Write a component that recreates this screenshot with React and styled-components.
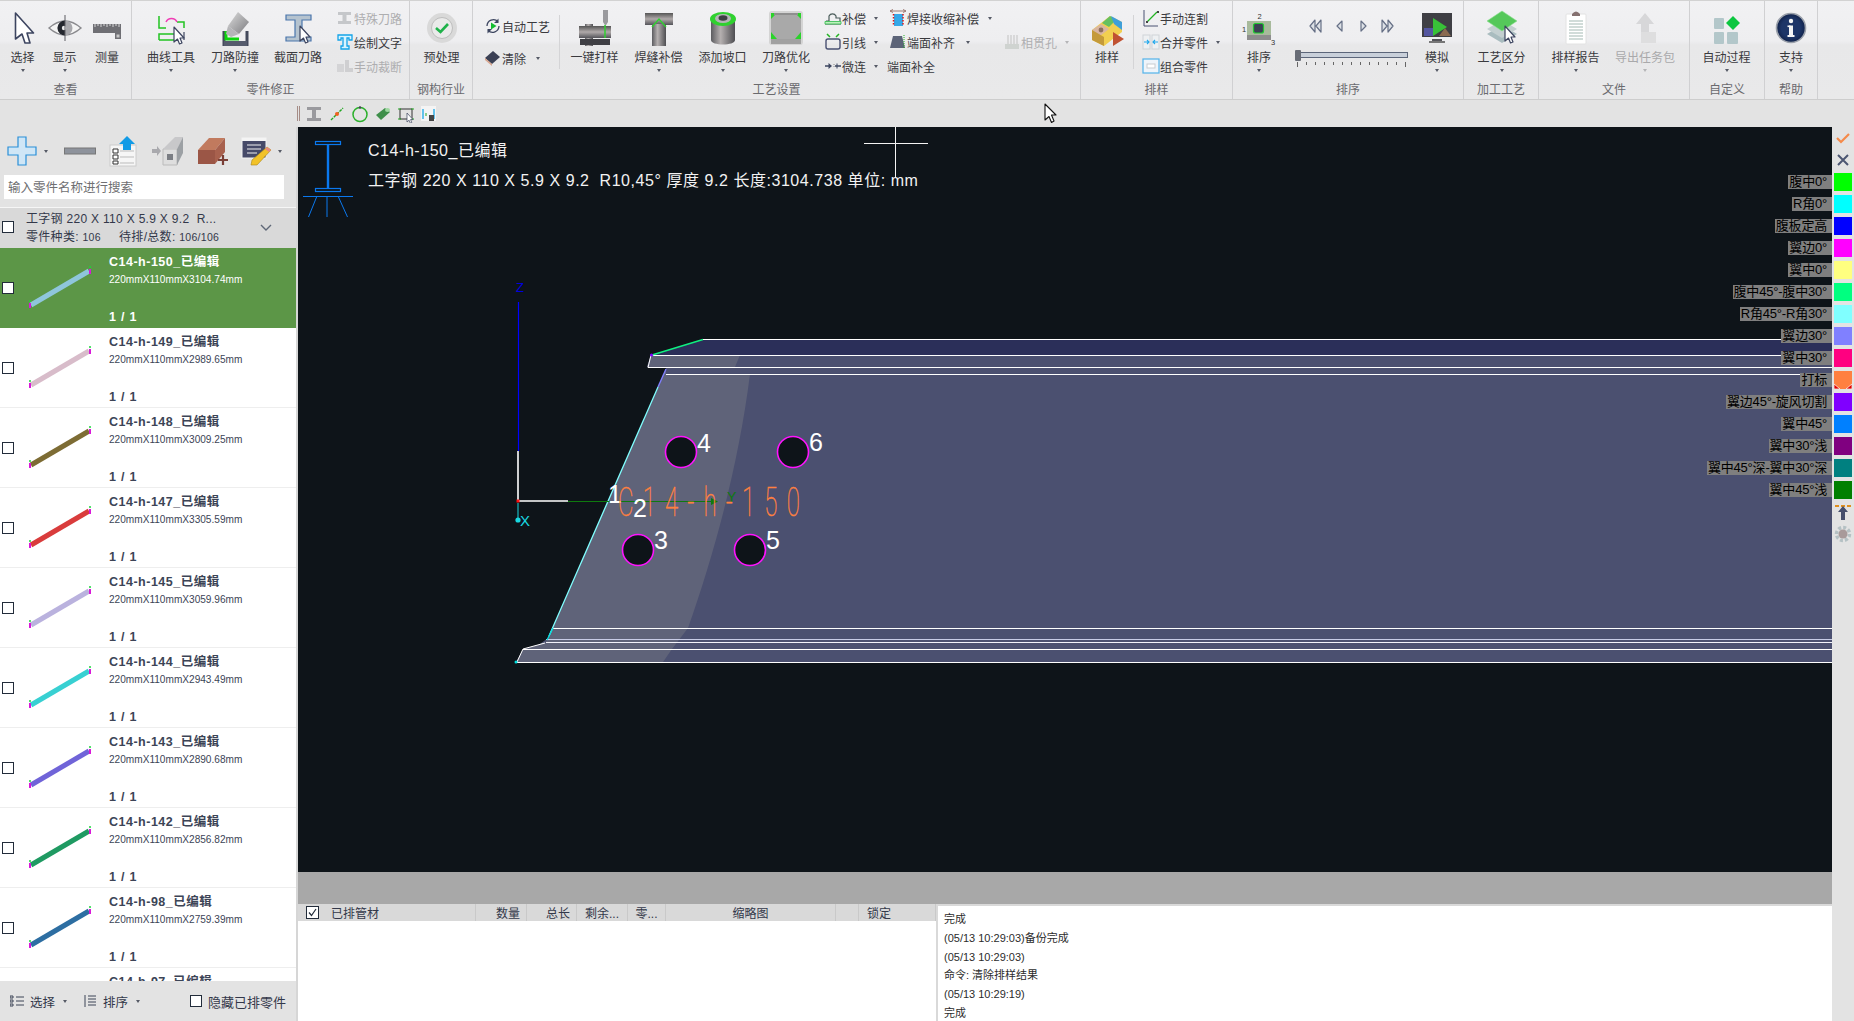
import React from 'react';
import styled, { createGlobalStyle } from 'styled-components';

const FONT = '"Liberation Sans", "Noto Sans CJK SC", sans-serif';

const GlobalStyle = createGlobalStyle`
  html, body { margin: 0; padding: 0; background: #e3e3e3; }
  body { font-family: ${FONT}; overflow: hidden; }
  * { box-sizing: border-box; }
`;

const Page = styled.div`
  position: relative;
  width: 1854px;
  height: 1021px;
  display: flex;
  flex-direction: column;
  overflow: hidden;
`;

/* ---------- ribbon ---------- */
const Ribbon = styled.div`
  height: 100px;
  flex: none;
  display: flex;
  border-top: 1px solid #d2d2d2;
  border-bottom: 1px solid #cdcdcd;
  background: linear-gradient(#f1f1f3 0, #eeeef0 40px, #e8e8e9 44px, #e9e9ea 100%);
`;

const Group = styled.div`
  width: ${(p) => p.$w}px;
  flex: none;
  padding-top: 6px;
  display: flex;
  flex-direction: column;
  border-right: 1px solid #d0d0d2;
`;

const GroupBody = styled.div`
  height: 73px;
  display: flex;
`;

const GroupLabel = styled.div`
  height: 19px;
  line-height: 21px;
  font-size: 12px;
  color: #6a6a6e;
  text-align: center;
`;

const LargeButton = styled.div`
  width: ${(p) => p.$w}px;
  flex: none;
  padding-top: 3px;
  display: flex;
  flex-direction: column;
  align-items: center;
  color: ${(p) => (p.$off ? '#a9a9ab' : '#3a3a3e')};
  font-size: 12px;
`;

const IconBox = styled.svg`
  width: 36px;
  height: 36px;
  flex: none;
  display: block;
`;

const LargeLabel = styled.div`
  margin-top: 5px;
  height: 14px;
  line-height: 14px;
  white-space: nowrap;
`;

const CaretMark = styled.span`
  display: block;
  flex: none;
  width: 0;
  height: 0;
  border-left: 2.5px solid transparent;
  border-right: 2.5px solid transparent;
  border-top: 3px solid ${(p) => (p.$off ? '#b5b5b7' : '#565a66')};
`;

const CaretSlot = styled.div`
  height: 10px;
  display: flex;
  align-items: center;
`;

const SmallColumn = styled.div`
  width: ${(p) => p.$w}px;
  margin-left: ${(p) => p.$ml || 0}px;
  margin-top: -1px;
  padding-top: ${(p) => p.$pt || 0}px;
  flex: none;
`;

const SmallRow = styled.div`
  height: ${(p) => p.$h || 24}px;
  margin-left: ${(p) => p.$ml || 0}px;
  display: flex;
  align-items: center;
  font-size: 12px;
  white-space: nowrap;
  color: ${(p) => (p.$off ? '#aeaeb0' : '#3a3a3e')};
  ${CaretMark} { margin-left: ${(p) => p.$cg || 8}px; }
`;

const SmallIcon = styled.svg`
  width: 18px;
  height: 18px;
  flex: none;
`;

const VRule = styled.div`
  width: 1px;
  height: 54px;
  margin-top: 8px;
  flex: none;
  background: #d4d4d6;
`;

const SliderBlock = styled.div`
  width: 113px;
  margin-left: 10px;
  margin-right: 3px;
  flex: none;
`;

const MediaRow = styled.div`
  height: 38px;
  display: flex;
  align-items: center;
  justify-content: space-around;
  padding: 0 8px;
`;

const Track = styled.div`
  position: relative;
  margin-top: 7px;
  height: 6px;
  background: #c9d0da;
  border: 1px solid #5c667a;
`;

const Thumb = styled.div`
  position: absolute;
  left: -1px;
  top: -3px;
  width: 6px;
  height: 11px;
  border-radius: 1px;
  background: #686c76;
`;

const Ticks = styled.div`
  margin-top: 4px;
  padding: 0 2px;
  display: flex;
  justify-content: space-between;
`;

const Tick = styled.i`
  display: block;
  width: 1px;
  height: ${(p) => (p.$tall ? 5 : 3)}px;
  background: #666;
`;

/* ---------- sub toolbar ---------- */
const SubBar = styled.div`
  height: 27px;
  flex: none;
  padding-left: 297px;
  display: flex;
  align-items: center;
  background: #e3e3e3;
`;

const Grip = styled.div`
  width: 3px;
  height: 15px;
  margin-right: 5px;
  border-left: 1px solid #a58c86;
  border-right: 1px solid #a58c86;
`;

const SubIcon = styled.svg`
  width: 18px;
  height: 18px;
  margin-right: 5px;
  flex: none;
`;

/* ---------- body ---------- */
const Body = styled.div`
  flex: 1;
  min-height: 0;
  display: flex;
`;

const LeftPanel = styled.div`
  width: 298px;
  flex: none;
  display: flex;
  flex-direction: column;
  background: #fff;
  border-right: 2px solid #d6d6d6;
`;

const PanelTools = styled.div`
  height: 48px;
  flex: none;
  display: flex;
  align-items: center;
  background: #e3e3e3;
`;

const ToolSlot = styled.div`
  width: ${(p) => p.$w}px;
  margin-left: ${(p) => p.$ml || 0}px;
  flex: none;
  display: flex;
  align-items: center;
  justify-content: center;
  svg { flex: none; }
`;

const SearchWrap = styled.div`
  height: 33px;
  flex: none;
  padding: 0 12px 8px 4px;
  background: #e3e3e3;
  border-bottom: 1px solid #f6f6f6;
`;

const SearchBox = styled.div`
  height: 24px;
  line-height: 26px;
  padding-left: 4px;
  background: #fff;
  font-size: 12.5px;
  color: #6f6f72;
`;

const GroupHeader = styled.div`
  height: 40px;
  flex: none;
  display: flex;
  align-items: center;
  background: #d9d9d9;
  color: #33384a;
  padding-left: 2px;
  padding-right: 24px;
`;

const Check = styled.span`
  width: 12px;
  height: 12px;
  flex: none;
  display: block;
  background: #fff;
  border: 1px solid #222c3a;
`;

const HeaderCheck = styled(Check)`
  margin-top: -2px;
`;

const HeaderText = styled.div`
  margin-left: 12px;
  flex: 1;
  font-size: 12px;
  line-height: 18px;
  letter-spacing: 0.3px;
  white-space: pre;
`;

const HeaderCount = styled.span`
  font-size: 10.5px;
`;

const PartList = styled.div`
  flex: 1;
  min-height: 0;
  overflow: hidden;
`;

const PartRow = styled.div`
  height: 80px;
  display: flex;
  padding-left: 2px;
  align-items: flex-start;
  background: ${(p) => (p.$on ? '#5c9647' : '#fff')};
  color: ${(p) => (p.$on ? '#fff' : '#3c4456')};
  border-bottom: 1px solid ${(p) => (p.$on ? '#5c9647' : '#eeeeee')};
  ${Check} { margin-top: 34px; }
`;

const Thumbnail = styled.svg`
  width: 80px;
  height: 80px;
  margin-left: 6px;
  flex: none;
`;

const PartText = styled.div`
  margin-left: 9px;
  padding-top: 7px;
  display: flex;
  flex-direction: column;
`;

const PartName = styled.div`
  font-size: 12.5px;
  font-weight: 700;
  line-height: 14px;
  letter-spacing: 0.5px;
`;

const PartSize = styled.div`
  margin-top: 4px;
  font-size: 10.1px;
  line-height: 14px;
`;

const PartCount = styled.div`
  margin-top: 23px;
  font-size: 12.5px;
  font-weight: 700;
  line-height: 14px;
  letter-spacing: 0.8px;
`;

const PanelFooter = styled.div`
  height: 40px;
  flex: none;
  display: flex;
  align-items: center;
  background: #e3e3e3;
  font-size: 12.5px;
  color: #33384a;
  padding-left: 10px;
`;

const FooterItem = styled.div`
  width: ${(p) => p.$w}px;
  flex: none;
  display: flex;
  align-items: center;
  gap: 6px;
  ${CaretMark} { margin-left: 2px; }
`;

const FooterLabel = styled.span`
  margin-left: 6px;
  font-size: 13px;
  white-space: nowrap;
`;

const Center = styled.div`
  flex: 1;
  min-width: 0;
  display: flex;
  flex-direction: column;
`;

const Canvas = styled.div`
  position: relative;
  height: 745px;
  flex: none;
  background: #0e1419;
  overflow: hidden;
`;

const Drawing = styled.svg`
  position: absolute;
  left: 0;
  top: 0;
  width: 1534px;
  height: 745px;
`;

const CanvasInfo = styled.div`
  position: absolute;
  left: 70px;
  top: 13px;
  color: #f2f2f2;
  font-size: 16px;
  white-space: pre;
  letter-spacing: 0.55px;
`;

const InfoLine = styled.div`
  height: 30px;
  line-height: 22px;
`;

const GreyBand = styled.div`
  height: 32px;
  flex: none;
  background: #a8a8a8;
`;

const BottomPanels = styled.div`
  flex: 1;
  min-height: 0;
  display: flex;
  background: #fff;
`;

const TablePane = styled.div`
  width: 640px;
  flex: none;
  border-right: 2px solid #d9d9d9;
`;

const TableHead = styled.div`
  height: 17px;
  display: grid;
  grid-template-columns: 178px 51px 50px 51px 38px 170px 23px 77px;
  background: #d9d9d9;
  font-size: 12px;
  color: #33384a;
`;

const HeadCell = styled.div`
  display: flex;
  align-items: center;
  justify-content: ${(p) => p.$justify || 'center'};
  gap: 12px;
  padding-left: ${(p) => p.$pl || 0}px;
  padding-right: ${(p) => p.$pr || 0}px;
  border-right: 1px solid #c9c9c9;
  white-space: nowrap;
  overflow: hidden;
`;

const TickBox = styled.svg`
  width: 13px;
  height: 13px;
  flex: none;
`;

const LogPane = styled.div`
  flex: 1;
  margin-top: 2px;
  padding: 4px 0 0 6px;
  font-size: 11px;
  line-height: 18.8px;
  color: #2c2c2c;
  overflow: hidden;
  box-shadow: 0 -2px 0 #d9d9d9;
`;

/* ---------- right strip ---------- */
const Strip = styled.div`
  width: 22px;
  flex: none;
  display: flex;
  flex-direction: column;
  background: #e3e3e3;
`;

const StripButton = styled.div`
  height: ${(p) => p.$h || 22}px;
  margin-top: ${(p) => p.$mt || 0}px;
  display: flex;
  align-items: center;
  justify-content: center;
`;

const LayerRow = styled.div`
  position: relative;
  height: 22px;
  padding: 2px 0 0 2px;
`;

const LayerSwatch = styled.div`
  position: relative;
  width: 18px;
  height: 18px;
  background: ${(p) => p.$c};
  overflow: hidden;
`;

const Corner = styled.svg`
  position: absolute;
  left: 0;
  bottom: 0;
  width: 18px;
  height: 18px;
`;

const LayerLabel = styled.div`
  position: absolute;
  right: 100%;
  top: 4px;
  height: 14px;
  padding: 0 5px 0 1px;
  background: #7f7f7f;
  color: #000;
  font-size: 13px;
  line-height: 14px;
  letter-spacing: -0.2px;
  white-space: nowrap;
`;

const Dashes = styled.div`
  margin: 4px 2px 0 3px;
  height: 2px;
  flex: none;
  background: repeating-linear-gradient(90deg, #e09020 0 4px, transparent 4px 6px);
`;

const MousePointer = styled.svg`
  position: absolute;
  left: 1044px;
  top: 103px;
  width: 14px;
  height: 21px;
`;

/* ---------- icons ---------- */
const Pointer = ({ x = 0, y = 0, s = 1 }) => (
  <path
    transform={`translate(${x} ${y}) scale(${s})`}
    d="M0 0 L10 11 L6 11 L8 16 L5.5 17 L3.5 12 L0 15 Z"
    fill="#fff"
    stroke="#3d4560"
    strokeWidth="1.2"
    strokeLinejoin="round"
  />
);

const Defs = () => (
  <svg width="0" height="0" style={{ position: 'absolute' }}>
    <defs>
      <linearGradient id="metalH" x1="0" y1="0" x2="1" y2="0">
        <stop offset="0" stopColor="#5c5c60" />
        <stop offset="0.4" stopColor="#b5b0b0" />
        <stop offset="1" stopColor="#4e4e52" />
      </linearGradient>
      <linearGradient id="metalV" x1="0" y1="0" x2="0" y2="1">
        <stop offset="0" stopColor="#555" />
        <stop offset="0.5" stopColor="#b0aaaa" />
        <stop offset="1" stopColor="#54545a" />
      </linearGradient>
      <linearGradient id="grayD" x1="0" y1="0" x2="1" y2="1">
        <stop offset="0" stopColor="#dcdcdc" />
        <stop offset="1" stopColor="#7a7a7e" />
      </linearGradient>
      <radialGradient id="infoBall">
        <stop offset="0.65" stopColor="#1d3567" />
        <stop offset="1" stopColor="#11224a" />
      </radialGradient>
    </defs>
  </svg>
);

const large = {
  select: <path d="M10.5 3 L28.5 23 L22 23 L25 33 L20 33 L17 24 L10.5 29 Z" fill="#fff" stroke="#3d4560" strokeWidth="1.6" strokeLinejoin="round" />,
  eye: (
    <>
      <path d="M2 18 Q18 4 34 18 Q18 32 2 18Z" fill="#f4f4f4" stroke="#8a8a8e" strokeWidth="1.4" />
      <circle cx="18" cy="18" r="7.5" fill="#a8a8ac" />
      <path d="M18 10.5 A7.5 7.5 0 0 0 18 25.5Z" fill="#24272e" />
      <circle cx="17" cy="18" r="2.2" fill="#e8e8e8" />
      <path d="M18 5 V31" stroke="#5a5a60" strokeWidth="1" />
    </>
  ),
  ruler: (
    <>
      <path d="M4 14 H32 V29 H26 V23 H4Z" fill="#6f6f74" />
      <path d="M27.5 24.5 H30.5 V27.5 H27.5Z" fill="#c8c8c8" />
      <path d="M6 14 v3 M9 14 v2 M12 14 v3 M15 14 v2 M18 14 v3 M21 14 v2 M24 14 v3 M27 14 v2 M30 14 v3" stroke="#d8d8d8" strokeWidth="1" />
    </>
  ),
  curve: (
    <>
      <path d="M6 6 V18 H13 M24 12 H31 V18" fill="none" stroke="#22c422" strokeWidth="1.5" />
      <path d="M13 12 A6 6 0 0 1 24 12" fill="none" stroke="#f03cb4" strokeWidth="1.5" />
      <path d="M6 30 V24 H22 M6 30 H24" fill="none" stroke="#22c422" strokeWidth="1.5" />
      <path d="M31 22 V30" stroke="#3d4560" strokeWidth="1.2" />
      <Pointer x={21} y={17} s={1} />
    </>
  ),
  collide: (
    <>
      <path d="M7 21 V36 M30 21 V36" stroke="#444a5c" strokeWidth="3" />
      <path d="M7 31 H30 V36 H7Z" fill="#555b6c" />
      <path d="M21 2 L32 12 L22 24 L11 16Z" fill="url(#grayD)" />
      <path d="M9 21 V29 H22" fill="none" stroke="#0ed40e" strokeWidth="3" />
      <path d="M11 16 L22 24 L14 27 L9 24Z" fill="#b5b5b8" />
    </>
  ),
  section: (
    <>
      <path d="M6 5 H31 V10 H22 V27 H31 V31 H6 V27 H15 V10 H6Z" fill="#b5c3cf" stroke="#4a76ac" strokeWidth="1.2" />
      <Pointer x={20} y={16} s={1} />
    </>
  ),
  prep: (
    <>
      <circle cx="18" cy="18" r="15" fill="#d9d9d9" />
      <circle cx="18" cy="18" r="10.5" fill="#eaeaea" stroke="#bdbdbd" />
      <path d="M12 18 L16.5 22 L24 14" fill="none" stroke="#1fb24a" strokeWidth="2.6" />
    </>
  ),
  machine: (
    <>
      <path d="M26 0 H31 V12 L28.5 16 L26 12Z" fill="#9a9a9e" />
      <rect x="8" y="14" width="8" height="22" fill="url(#metalH)" />
      <rect x="2" y="16" width="32" height="12" fill="url(#metalV)" />
      <rect x="3" y="29" width="30" height="6" fill="#3f3f44" />
      <path d="M28 15 V28" stroke="#2fd12f" strokeWidth="1.5" />
    </>
  ),
  tee: (
    <>
      <rect x="4" y="3" width="28" height="12" fill="url(#metalV)" />
      <rect x="11" y="14" width="14" height="22" fill="url(#metalH)" />
      <path d="M11 17 L18 9 L25 17" fill="none" stroke="#2fd12f" strokeWidth="1.4" />
    </>
  ),
  bevel: (
    <>
      <path d="M6 10 V30 C6 36 30 36 30 30 V10Z" fill="url(#metalH)" />
      <ellipse cx="18" cy="9" rx="13" ry="7" fill="#2fd12f" />
      <ellipse cx="18" cy="8.5" rx="8" ry="4.5" fill="#b5b5b8" />
      <ellipse cx="18" cy="8" rx="4.5" ry="2.8" fill="#3e3e44" />
    </>
  ),
  optimize: (
    <>
      <rect x="1" y="1" width="34" height="34" rx="3" fill="#d4d4d4" />
      <rect x="3" y="27" width="30" height="7" fill="#a0a0a0" />
      <rect x="3" y="3" width="30" height="26" fill="#2ad32a" />
      <path d="M9 3 H27 L33 9 V22 L27 29 H9 L3 22 V9Z" fill="#a9a9a9" />
      <path d="M6 3 H30 V5 H6Z" fill="#8f8f8f" />
    </>
  ),
  nest: (
    <>
      <path d="M3 20 L21 6 L33 12 L33 22 L15 36 L3 30Z" fill="#f2cf50" />
      <path d="M3 20 L12 14 L20 19 L11 26Z" fill="#d9b5a0" />
      <path d="M13 13 L21 6 L27 10 L20 17Z" fill="#66c060" />
      <path d="M22 6 L33 12 V20 L25 14Z" fill="#3f9fd8" />
      <path d="M3 20 V30 L15 36 V27Z" fill="#c49a3a" />
      <circle cx="12" cy="20" r="2.4" fill="#8d6e5c" />
      <path d="M24 22 L35 29 L24 36Z" fill="#c05232" />
    </>
  ),
  order: (
    <>
      <text x="16.5" y="9" fontSize="7.5" fill="#333" fontFamily="Liberation Sans">2</text>
      <text x="1" y="22" fontSize="7.5" fill="#333" fontFamily="Liberation Sans">1</text>
      <text x="30" y="35" fontSize="7.5" fill="#333" fontFamily="Liberation Sans">3</text>
      <rect x="6" y="11" width="24" height="19" fill="#a8ba9c" />
      <rect x="6" y="25" width="24" height="5" fill="#8d8d8d" />
      <rect x="12.5" y="13.5" width="10" height="9.5" rx="2" fill="#3c4054" stroke="#20cc30" strokeWidth="1.2" />
    </>
  ),
  simulate: (
    <>
      <rect x="3" y="3" width="30" height="24" fill="#3f3f44" />
      <path d="M5 18 H14 V26 H5Z" fill="#5456a0" />
      <path d="M26 18 L32 26 H20Z" fill="#8a6a50" />
      <path d="M14 8 L28 17 L14 26Z" fill="#38c238" />
      <path d="M13 29 H23 V31 H13Z" fill="#55555a" />
      <path d="M10 31 H26 V33 H10Z" fill="#777" />
    </>
  ),
  layers: (
    <>
      <path d="M18 15 L33 24 L18 33 L3 24Z" fill="#a9bcbf" />
      <path d="M18 10 L33 19 L18 28 L3 19Z" fill="#c3cfd0" />
      <path d="M18 1 L33 11 L18 21 L3 11Z" fill="#55c85a" stroke="#8adf8e" strokeWidth="0.6" />
      <Pointer x={21} y={16} s={1} />
    </>
  ),
  report: (
    <>
      <rect x="8" y="4" width="20" height="30" rx="1" fill="#fff" stroke="#e2e2e2" />
      <path d="M14 4 Q18 -1 22 4 V6 H14Z" fill="#857170" />
      <path d="M11 11 H25 M11 14 H25 M11 17 H25 M11 20 H25 M11 23 H25 M11 26 H25 M11 29 H25" stroke="#a4b9b4" strokeWidth="1.1" />
    </>
  ),
  exportPkg: (
    <>
      <path d="M18 3 L27 14 H22 V26 H14 V14 H9Z" fill="#d7d7d9" />
      <path d="M14 22 H29 V33 H14Z" fill="#dededf" />
    </>
  ),
  auto: (
    <>
      <rect x="5" y="8" width="10" height="11" rx="1" fill="#b3c7ca" />
      <rect x="5" y="22" width="10" height="12" rx="1" fill="#b3c7ca" />
      <rect x="18" y="22" width="11" height="12" rx="1" fill="#b3c7ca" />
      <path d="M24 6 L31 13 L24 20 L17 13Z" fill="#0cc640" />
    </>
  ),
  info: (
    <>
      <circle cx="18" cy="18" r="14.5" fill="url(#infoBall)" stroke="#9aa0aa" strokeWidth="1.6" />
      <rect x="16" y="15.5" width="4" height="10" fill="#f4f4f4" />
      <rect x="14.5" y="25" width="7" height="2" fill="#f4f4f4" />
      <rect x="14.5" y="15.5" width="3" height="1.6" fill="#f4f4f4" />
      <circle cx="18" cy="11" r="2.2" fill="#f4f4f4" />
    </>
  ),
};

const small = {
  special: <path d="M2 3 H15 V6 H10.5 V12 H15 V15 H2 V12 H6.5 V6 H2Z" fill="#c5c7ca" />,
  text: <path d="M2 2 H16 V7 H13 V5 H11 V13 H13 V16 H5 V13 H7 V5 H5 V7 H2Z" fill="#d8f4ff" stroke="#15a4e8" strokeWidth="1.3" />,
  trim: (
    <>
      <path d="M1 7 H8 V15 H1Z" fill="#d4d4d6" />
      <path d="M9 3 H13 V11 H17 V15 H9Z" fill="#cfcfd1" />
    </>
  ),
  auto: (
    <>
      <path d="M3 9 A6.5 6.5 0 0 1 14 4.5 M15 9 A6.5 6.5 0 0 1 4 13.5" fill="none" stroke="#3d4660" strokeWidth="1.3" />
      <path d="M14.5 1.5 V6 H10Z M3.5 16.5 V12 H8Z" fill="#3d4660" />
      <path d="M7 5.5 L12.5 9 L7 12.5Z" fill="#14bc30" />
    </>
  ),
  clear: (
    <>
      <path d="M1 9 L9 2 L16 8 L8 15Z" fill="#3b4054" />
      <path d="M1 9 L8 15 L8 17 L1 11Z" fill="#d8a48c" />
    </>
  ),
  comp: (
    <>
      <path d="M1 15 H17 M2 12 H5 V7 A4 4 0 0 1 12 7 V9 H16 V12" fill="none" stroke="#4a5c5a" strokeWidth="1.2" />
      <path d="M1 12.5 H17 V15 H1Z" fill="#bdf0bd" stroke="#2dba4a" strokeWidth="0.8" />
    </>
  ),
  lead: (
    <>
      <rect x="2" y="6" width="14" height="10" rx="2" fill="none" stroke="#4a5273" strokeWidth="1.4" />
      <path d="M3 1 L6 4 M15 1 L12 4" stroke="#22b322" strokeWidth="1.5" />
    </>
  ),
  micro: (
    <>
      <path d="M1 9 H7 M11 9 H17" stroke="#3d4660" strokeWidth="1.3" />
      <path d="M8 9 L4.5 6 V12Z" fill="#3d4660" />
      <path d="M10 7 V11" stroke="#888" strokeDasharray="1 1" />
      <path d="M13 6.5 V11.5" stroke="#3d4660" />
    </>
  ),
  shrink: (
    <>
      <path d="M1 2 H17 M4 0.5 L1 2 L4 3.5 M14 0.5 L17 2 L14 3.5" fill="none" stroke="#9e7a72" strokeWidth="1" />
      <rect x="5" y="5" width="9" height="12" fill="#36a8e8" />
      <path d="M4.5 5 V17 M14 5 V17" stroke="#e01818" strokeDasharray="1.5 1.5" strokeWidth="1.5" />
    </>
  ),
  align: (
    <>
      <path d="M4 3 H13 L16 15 H1Z" fill="#5c6478" />
      <path d="M15 2 V15" stroke="#22b322" strokeDasharray="1 1" />
    </>
  ),
  through: (
    <>
      <path d="M2 11 H16 V16 H2Z" fill="#cfd3d0" />
      <path d="M5 2 V11 M8 2 V11 M11 2 V11 M14 2 V11" stroke="#cfcfcf" strokeWidth="1.4" />
    </>
  ),
  cut: (
    <>
      <path d="M2 1 V17 H16" fill="none" stroke="#4a5273" strokeWidth="1" />
      <path d="M5 13 L15 3" stroke="#22b322" strokeWidth="1.3" />
      <path d="M15 2 h2 v2 h-2Z M4 12 h2 v2 h-2Z" fill="#444" />
    </>
  ),
  merge: (
    <>
      <rect x="1" y="2" width="7" height="14" fill="#eef0f2" stroke="#cfd4d8" />
      <rect x="10" y="2" width="7" height="14" fill="#eef0f2" stroke="#cfd4d8" />
      <path d="M2 9 H7 M16 9 H11 M5 7 L7 9 L5 11 M13 7 L11 9 L13 11" fill="none" stroke="#22a8ec" strokeWidth="1.1" />
    </>
  ),
  combine: (
    <>
      <rect x="1" y="2" width="16" height="14" fill="#eef4fa" stroke="#52b2ea" strokeWidth="1.2" />
      <rect x="5" y="7" width="8" height="4" fill="#fff" stroke="#c8ccd0" />
    </>
  ),
};

const Large = ({ w, icon, label, caret, off }) => (
  <LargeButton $w={w} $off={off}>
    <IconBox viewBox="0 0 36 36">{large[icon]}</IconBox>
    <LargeLabel>{label}</LargeLabel>
    <CaretSlot>{caret && <CaretMark $off={off} />}</CaretSlot>
  </LargeButton>
);

const Small = ({ icon, label, caret, off, h, cg, ml }) => (
  <SmallRow $off={off} $h={h} $cg={cg} $ml={ml}>
    {icon && <SmallIcon viewBox="0 0 18 18">{small[icon]}</SmallIcon>}
    <span>{label}</span>
    {caret && <CaretMark $off={off} />}
  </SmallRow>
);

const Media = ({ d }) => (
  <svg width="14" height="16" viewBox="0 0 14 16">
    <path d={d} fill="#dde1e6" stroke="#667086" strokeWidth="1.2" strokeLinejoin="round" />
  </svg>
);

const parts = [
  ['C14-h-150_已编辑', '3104.74', '#8fc6dc'],
  ['C14-h-149_已编辑', '2989.65', '#d8bcca'],
  ['C14-h-148_已编辑', '3009.25', '#7d6c34'],
  ['C14-h-147_已编辑', '3305.59', '#d93c3c'],
  ['C14-h-145_已编辑', '3059.96', '#bab2de'],
  ['C14-h-144_已编辑', '2943.49', '#38d0d2'],
  ['C14-h-143_已编辑', '2890.68', '#7064d8'],
  ['C14-h-142_已编辑', '2856.82', '#1f9a62'],
  ['C14-h-98_已编辑', '2759.39', '#2d6ea2'],
  ['C14-h-97_已编辑', '2741.10', '#888888'],
];

const layers = [
  ['腹中0°', '#00ff00'],
  ['R角0°', '#00ffff'],
  ['腹板定高', '#0000ff'],
  ['翼边0°', '#ff00ff'],
  ['翼中0°', '#ffff80'],
  ['腹中45°-腹中30°', '#00ff80'],
  ['R角45°-R角30°', '#80ffff'],
  ['翼边30°', '#8080ff'],
  ['翼中30°', '#ff0080'],
  ['打标', '#ff8040', true],
  ['翼边45°-旋风切割', '#8000ff'],
  ['翼中45°', '#0080ff'],
  ['翼中30°浅', '#800080'],
  ['翼中45°深-翼中30°深', '#008080'],
  ['翼中45°浅', '#008000'],
];

const logLines = [
  '完成',
  '(05/13 10:29:03)备份完成',
  '(05/13 10:29:03)',
  '命令: 清除排样结果',
  '(05/13 10:29:19)',
  '完成',
];

const holes = [
  [681, 452, '4', 704, 452],
  [793, 452, '6', 816, 451],
  [638, 550, '3', 661, 549],
  [750, 550, '5', 773, 549],
];

const BeamDrawing = () => (
  <Drawing viewBox="298 127 1534 745">
    {/* I 字钢示意 */}
    <g stroke="#0a78ee" fill="none">
      <rect x="315.5" y="141.5" width="25" height="3" strokeWidth="1.2" />
      <rect x="315.5" y="188.5" width="25" height="3" strokeWidth="1.2" />
      <path d="M328 144 V189" strokeWidth="2.4" />
      <path d="M303 196.5 H353 M327 196 V217 M317 196 L308.5 217 M338 196 L347.5 217" strokeWidth="1" />
    </g>
    <path d="M864 143.5 H928 M895.5 127 V177" stroke="#f4f4f4" strokeWidth="1" />

    {/* 钢体 */}
    <path d="M651 355 L703 339.5 H1832 V355Z" fill="#2b2f59" />
    <path d="M651 355 H1832 V374 H666 V367 H647Z" fill="#4b5070" />
    <path d="M651 355 H740 L735 367 H647Z" fill="#5f6379" />
    <path d="M666 369 L548 638 L516 662 H1832 V374 H666Z" fill="#4b5070" />
    <path d="M666 369 L548 638 L545 643 L523 649 L516 662 H663 L672 649 L688 628 C712 560 738 470 750 374 H666Z" fill="#5f6379" />
    <g stroke="#fff" strokeWidth="1" fill="none">
      <path d="M703 339.5 H1832" />
      <path d="M651 355.5 H1832" />
      <path d="M651 355 L648 367.5 H1832" />
      <path d="M666 374.5 H1832" />
      <path d="M553 628.5 H1832" />
      <path d="M523 649.5 H1832" />
      <path d="M516 662.5 H1832" />
      <path d="M545 643 L523 649 L517 662" />
    </g>
    <path d="M546 639.5 H1832" stroke="#c8cce6" strokeWidth="1" />
    <path d="M546 642.5 H1832" stroke="#f2f2fa" strokeWidth="1" />
    <path d="M652 355 L703 339.5" stroke="#10f080" strokeWidth="1.4" />
    <circle cx="651.5" cy="355" r="1.6" fill="#8000ff" />
    <path d="M666 369 L658 387" stroke="#8080ff" strokeWidth="1.4" />
    <path d="M658 387 L549 636" stroke="#80ffff" strokeWidth="1.3" />
    <path d="M553 628 L547 640" stroke="#00e0e0" strokeWidth="1.3" />
    <circle cx="516" cy="662" r="1.5" fill="#00e0e0" />

    {/* 坐标轴 */}
    <path d="M518.5 302 V451" stroke="#0000ff" strokeWidth="1.2" />
    <text x="516" y="292" fontSize="13" fill="#0000e0" fontFamily="Liberation Sans">Z</text>
    <path d="M518 451 V501 H568" fill="none" stroke="#fff" strokeWidth="1.6" />
    <path d="M568 501.5 H712" stroke="#0e7a0e" strokeWidth="1" />
    <path d="M711 498 L718 501.5 L711 505Z" fill="#0e7a0e" />
    <text x="727" y="502" fontSize="14" fill="#0e7a0e" fontFamily="Liberation Sans">Y</text>
    <rect x="516.5" y="499.5" width="3" height="3" fill="#ff1010" />
    <path d="M518 503 V519" stroke="#19d8e0" strokeWidth="1" />
    <circle cx="518" cy="520" r="2.6" fill="#19d8e0" />
    <text x="520" y="526" fontSize="15" fill="#19d8e0" fontFamily="Liberation Sans">X</text>

    {/* 孔 */}
    {holes.map(([cx, cy, n, tx, ty]) => (
      <g key={n}>
        <circle cx={cx} cy={cy} r="15.5" fill="#0e1419" stroke="#ff14ff" strokeWidth="1.6" />
        <text x={tx} y={ty} fontSize="25" fill="#fff" fontFamily="Liberation Sans" textAnchor="middle">{n}</text>
      </g>
    ))}
    <text x="608" y="503" fontSize="25" fill="#fff" fontFamily="Liberation Sans">1</text>
    <text x="633" y="517" fontSize="25" fill="#fff" fontFamily="Liberation Sans">2</text>

    {/* 零件名：字窄、字距宽 */}
    <text
      transform="translate(618 516) scale(0.6 1)"
      fontSize="40"
      fontWeight="100"
      fontFamily="Roboto, 'Liberation Sans', sans-serif"
      fill="#ff8040"
      stroke="#ff8040"
      strokeWidth="0.5"
      textLength="303"
      lengthAdjust="spacing"
    >
      C14-h-150
    </text>
  </Drawing>
);

const App = () => (
  <Page>
    <GlobalStyle />
    <Defs />
    <Ribbon>
      <Group $w={132}>
        <GroupBody>
          <Large w={45} icon="select" label="选择" caret />
          <Large w={39} icon="eye" label="显示" caret />
          <Large w={46} icon="ruler" label="测量" />
        </GroupBody>
        <GroupLabel>查看</GroupLabel>
      </Group>
      <Group $w={278}>
        <GroupBody>
          <Large w={78} icon="curve" label="曲线工具" caret />
          <Large w={50} icon="collide" label="刀路防撞" caret />
          <Large w={76} icon="section" label="截面刀路" />
          <SmallColumn $w={72}>
            <Small icon="special" label="特殊刀路" off />
            <Small icon="text" label="绘制文字" />
            <Small icon="trim" label="手动裁断" off />
          </SmallColumn>
        </GroupBody>
        <GroupLabel>零件修正</GroupLabel>
      </Group>
      <Group $w={63}>
        <GroupBody>
          <Large w={63} icon="prep" label="预处理" />
        </GroupBody>
        <GroupLabel>钢构行业</GroupLabel>
      </Group>
      <Group $w={608}>
        <GroupBody>
          <SmallColumn $w={75} $ml={11} $pt={4}>
            <Small icon="auto" label="自动工艺" h={32} />
            <Small icon="clear" label="清除" caret h={32} cg={10} />
          </SmallColumn>
          <VRule />
          <Large w={69} icon="machine" label="一键打样" />
          <Large w={59} icon="tee" label="焊缝补偿" caret />
          <Large w={69} icon="bevel" label="添加坡口" caret />
          <Large w={58} icon="optimize" label="刀路优化" caret />
          <SmallColumn $w={65} $ml={9}>
            <Small icon="comp" label="补偿" caret cg={8} />
            <Small icon="lead" label="引线" caret cg={8} />
            <Small icon="micro" label="微连" caret cg={8} />
          </SmallColumn>
          <SmallColumn $w={114}>
            <Small icon="shrink" label="焊接收缩补偿" caret cg={9} />
            <Small icon="align" label="端面补齐" caret cg={11} />
            <Small label="端面补全" ml={-2} />
          </SmallColumn>
          <SmallColumn $w={70}>
            <Small label=" " />
            <Small icon="through" label="相贯孔" caret off />
          </SmallColumn>
        </GroupBody>
        <GroupLabel>工艺设置</GroupLabel>
      </Group>
      <Group $w={152}>
        <GroupBody>
          <Large w={52} icon="nest" label="排样" />
          <VRule />
          <SmallColumn $w={88} $ml={8}>
            <Small icon="cut" label="手动连割" />
            <Small icon="merge" label="合并零件" caret />
            <Small icon="combine" label="组合零件" />
          </SmallColumn>
        </GroupBody>
        <GroupLabel>排样</GroupLabel>
      </Group>
      <Group $w={231}>
        <GroupBody>
          <Large w={52} icon="order" label="排序" caret />
          <SliderBlock>
            <MediaRow>
              <Media d="M7 2 L2 8 L7 14Z M13 2 L8 8 L13 14Z" />
              <Media d="M10 3 L5 8 L10 13Z" />
              <Media d="M4 3 L9 8 L4 13Z" />
              <Media d="M1 2 L6 8 L1 14Z M7 2 L12 8 L7 14Z" />
            </MediaRow>
            <Track>
              <Thumb />
            </Track>
            <Ticks>
              {Array.from({ length: 13 }, (_, i) => (
                <Tick key={i} $tall={i === 0 || i === 12} />
              ))}
            </Ticks>
          </SliderBlock>
          <Large w={52} icon="simulate" label="模拟" caret />
        </GroupBody>
        <GroupLabel>排序</GroupLabel>
      </Group>
      <Group $w={75}>
        <GroupBody>
          <Large w={75} icon="layers" label="工艺区分" caret />
        </GroupBody>
        <GroupLabel>加工工艺</GroupLabel>
      </Group>
      <Group $w={151}>
        <GroupBody>
          <Large w={73} icon="report" label="排样报告" caret />
          <Large w={66} icon="exportPkg" label="导出任务包" caret off />
        </GroupBody>
        <GroupLabel>文件</GroupLabel>
      </Group>
      <Group $w={75}>
        <GroupBody>
          <Large w={73} icon="auto" label="自动过程" caret />
        </GroupBody>
        <GroupLabel>自定义</GroupLabel>
      </Group>
      <Group $w={53}>
        <GroupBody>
          <Large w={52} icon="info" label="支持" caret />
        </GroupBody>
        <GroupLabel>帮助</GroupLabel>
      </Group>
    </Ribbon>

    <SubBar>
      <Grip />
      <SubIcon viewBox="0 0 18 18">
        <path d="M2 2 H16 V5 H11 V13 H16 V16 H2 V13 H7 V5 H2Z" fill="#9a9a9e" />
      </SubIcon>
      <SubIcon viewBox="0 0 18 18">
        <path d="M3 15 L15 3" stroke="#22a822" strokeWidth="1.4" strokeDasharray="3 1" />
        <circle cx="9" cy="9" r="2" fill="#f06020" />
      </SubIcon>
      <SubIcon viewBox="0 0 18 18">
        <circle cx="9" cy="9.5" r="7" fill="none" stroke="#2bb02b" strokeWidth="1.5" />
        <circle cx="9" cy="2.5" r="1.2" fill="#445" />
      </SubIcon>
      <SubIcon viewBox="0 0 18 18">
        <path d="M2 10 L11 3 L16 7 L7 15Z" fill="#3f8f4a" />
        <ellipse cx="13.5" cy="5" rx="2.5" ry="2" fill="#9ed8a0" />
      </SubIcon>
      <SubIcon viewBox="0 0 18 18">
        <rect x="3" y="4" width="12" height="10" fill="none" stroke="#333" />
        <path d="M1 4 H4 M14 4 H17 M1 14 H4 M14 14 H17" stroke="#22a822" />
        <Pointer x={10} y={8} s={0.6} />
      </SubIcon>
      <SubIcon viewBox="0 0 18 18">
        <rect x="1" y="1" width="15" height="15" fill="#f4f4f4" />
        <path d="M3 4 V14 M14 4 V14" stroke="#18a8e8" strokeWidth="1.3" />
        <path d="M6 8 V11" stroke="#22a822" />
        <path d="M9 10 h5 v6 h-5Z" fill="#444" />
      </SubIcon>
    </SubBar>

    <Body>
      <LeftPanel>
        <PanelTools>
          <ToolSlot $w={44}>
            <svg width="30" height="30" viewBox="0 0 30 30">
              <path d="M11 1 H19 V11 H29 V19 H19 V29 H11 V19 H1 V11 H11Z" fill="#cfe6f6" stroke="#2a8fd8" strokeWidth="1.2" />
            </svg>
          </ToolSlot>
          <ToolSlot $w={4}>
            <CaretMark />
          </ToolSlot>
          <ToolSlot $w={64}>
            <svg width="32" height="8" viewBox="0 0 32 8">
              <rect x="0.5" y="1" width="31" height="6" fill="#8e939c" stroke="#777" />
            </svg>
          </ToolSlot>
          <ToolSlot $w={24}>
            <svg width="32" height="32" viewBox="0 0 32 32">
              <rect x="2" y="10" width="26" height="21" fill="#f6f6f6" stroke="#ccc" />
              <path d="M5 14 h5 v4 h-5Z M5 20 h5 v4 h-5Z M5 26 h5 v3 h-5Z" fill="#fff" stroke="#333" />
              <path d="M12 16 H26 M12 22 H26 M12 28 H26" stroke="#bbb" />
              <path d="M19 1 L27 9 H23 V15 H15 V9 H11Z" fill="#129be6" />
            </svg>
          </ToolSlot>
          <ToolSlot $w={64}>
            <svg width="34" height="30" viewBox="0 0 34 30">
              <path d="M1 13 H6 V10 L10 15 L6 20 V17 H1Z" fill="#a9a9ad" />
              <path d="M12 13 H26 V29 H12Z" fill="#dedede" stroke="#bbb" />
              <path d="M12 13 L24 1 H32 L26 13Z" fill="#c8c8ca" />
              <path d="M26 13 L32 1 V17 L26 29Z" fill="#9ca0a4" />
              <rect x="16" y="18" width="6" height="6" fill="#7b7e84" />
            </svg>
          </ToolSlot>
          <ToolSlot $w={26}>
            <svg width="32" height="30" viewBox="0 0 32 30">
              <path d="M1 14 H18 V28 H1Z" fill="#9b5646" />
              <path d="M1 14 L12 2 H28 L18 14Z" fill="#c17a5e" />
              <path d="M18 14 L28 2 V16 L18 28Z" fill="#a8614e" />
              <path d="M21 24 H31 M26 19 V29" stroke="#7a3f36" strokeWidth="2.2" />
            </svg>
          </ToolSlot>
          <ToolSlot $w={32} $ml={15}>
            <svg width="32" height="30" viewBox="0 0 32 30">
              <rect x="1" y="2" width="24" height="20" fill="#464a68" stroke="#f4f4f4" />
              <rect x="1" y="2" width="24" height="3" fill="#f4f4f4" />
              <path d="M6 9 H20 M6 13 H20 M6 17 H16" stroke="#f0f0f0" strokeWidth="1.2" />
              <path d="M26 11 L30 14 L16 29 L10 29 L11 24Z" fill="#f2c228" stroke="#a88418" strokeWidth="0.6" />
              <path d="M26 11 L30 14 L28 16 L24 13Z" fill="#e88a80" />
            </svg>
          </ToolSlot>
          <ToolSlot $w={6} $ml={4}>
            <CaretMark />
          </ToolSlot>
        </PanelTools>
        <SearchWrap>
          <SearchBox>输入零件名称进行搜索</SearchBox>
        </SearchWrap>
        <GroupHeader>
          <HeaderCheck />
          <HeaderText>
            <div>工字钢 220 X 110 X 5.9 X 9.2  R...</div>
            <div>
              零件种类: <HeaderCount>106</HeaderCount>     待排/总数: <HeaderCount>106/106</HeaderCount>
            </div>
          </HeaderText>
          <svg width="12" height="8" viewBox="0 0 12 8">
            <path d="M1 1 L6 6 L11 1" fill="none" stroke="#5f6878" strokeWidth="1.4" />
          </svg>
        </GroupHeader>
        <PartList>
          {parts.map(([name, len, color], i) => (
            <PartRow key={name} $on={i === 0}>
              <Check />
              <Thumbnail viewBox="0 0 80 80">
                <path d="M11 57 L69 23" stroke={color} strokeWidth="5" />
                <path d="M10 55 v5 M70 21 v5" stroke="#d818d8" strokeWidth="2" />
                <path d="M9 53 h2 M69 19 h2" stroke="#18d838" strokeWidth="1.5" />
              </Thumbnail>
              <PartText>
                <PartName>{name}</PartName>
                <PartSize>220mmX110mmX{len}mm</PartSize>
                <PartCount>1 / 1</PartCount>
              </PartText>
            </PartRow>
          ))}
        </PartList>
        <PanelFooter>
          <FooterItem $w={73}>
            <svg width="14" height="14" viewBox="0 0 14 14">
              <path d="M0 2 h3 v2 h-3Z M0 6 h3 v2 h-3Z M0 10 h3 v2 h-3Z" fill="none" stroke="#3c4456" />
              <path d="M6 3 H14 M6 7 H14 M6 11 H14" stroke="#3c4456" />
            </svg>
            选择
            <CaretMark />
          </FooterItem>
          <FooterItem $w={107}>
            <svg width="14" height="14" viewBox="0 0 14 14">
              <path d="M2 1 V13 M5 2 H13 M5 5 H13 M5 8 H13 M5 11 H13" stroke="#3c4456" />
            </svg>
            排序
            <CaretMark />
          </FooterItem>
          <Check />
          <FooterLabel>隐藏已排零件</FooterLabel>
        </PanelFooter>
      </LeftPanel>

      <Center>
        <Canvas>
          <BeamDrawing />
          <CanvasInfo>
            <InfoLine>C14-h-150_已编辑</InfoLine>
            <InfoLine>工字钢 220 X 110 X 5.9 X 9.2  R10,45° 厚度 9.2 长度:3104.738 单位: mm</InfoLine>
          </CanvasInfo>
        </Canvas>
        <GreyBand />
        <BottomPanels>
          <TablePane>
            <TableHead>
              <HeadCell $justify="flex-start" $pl={8}>
                <TickBox viewBox="0 0 13 13">
                  <rect x="0.5" y="0.5" width="12" height="12" fill="#fff" stroke="#222c3a" />
                  <path d="M3 6.5 L5.5 9.5 L10 3" fill="none" stroke="#222c3a" strokeWidth="1.2" />
                </TickBox>
                已排管材
              </HeadCell>
              <HeadCell $justify="flex-end" $pr={6}>数量</HeadCell>
              <HeadCell $justify="flex-end" $pr={6}>总长</HeadCell>
              <HeadCell>剩余...</HeadCell>
              <HeadCell>零...</HeadCell>
              <HeadCell>缩略图</HeadCell>
              <HeadCell />
              <HeadCell $justify="flex-start" $pl={8}>锁定</HeadCell>
            </TableHead>
          </TablePane>
          <LogPane>
            {logLines.map((line, i) => (
              <div key={i}>{line}</div>
            ))}
          </LogPane>
        </BottomPanels>
      </Center>

      <Strip>
        <StripButton>
          <svg width="14" height="12" viewBox="0 0 14 12">
            <path d="M1 6 L5 10 L13 2" fill="none" stroke="#f58a4a" strokeWidth="2.2" />
          </svg>
        </StripButton>
        <StripButton>
          <svg width="12" height="12" viewBox="0 0 12 12">
            <path d="M1 1 L11 11 M11 1 L1 11" stroke="#4c5672" strokeWidth="2" />
          </svg>
        </StripButton>
        {layers.map(([label, color, mark]) => (
          <LayerRow key={label}>
            <LayerLabel>{label}</LayerLabel>
            <LayerSwatch $c={color}>
              {mark && (
                <Corner viewBox="0 0 18 18">
                  <path d="M0 13 L6 18 H0Z M18 13 L12 18 H18Z" fill="#e00000" stroke="#fff" strokeWidth="0.7" />
                </Corner>
              )}
            </LayerSwatch>
          </LayerRow>
        ))}
        <Dashes />
        <StripButton $h={12}>
          <svg width="10" height="14" viewBox="0 0 10 14">
            <path d="M5 0 L10 6 H7 V14 H3 V6 H0Z" fill="#454e6c" />
          </svg>
        </StripButton>
        <StripButton $mt={4}>
          <svg width="18" height="18" viewBox="0 0 18 18">
            <circle cx="9" cy="9" r="6.5" fill="none" stroke="#b5c1c4" strokeWidth="3.5" strokeDasharray="3 2" />
            <circle cx="9" cy="9" r="4.5" fill="#a89a9a" />
          </svg>
        </StripButton>
      </Strip>
    </Body>

    <MousePointer viewBox="0 0 14 21">
      <path d="M1 1 L12 12 H7.5 L10 18 L7.5 19.5 L5 13.5 L1 17Z" fill="#fff" stroke="#111" strokeWidth="1.1" strokeLinejoin="round" />
    </MousePointer>
  </Page>
);

export default App;
